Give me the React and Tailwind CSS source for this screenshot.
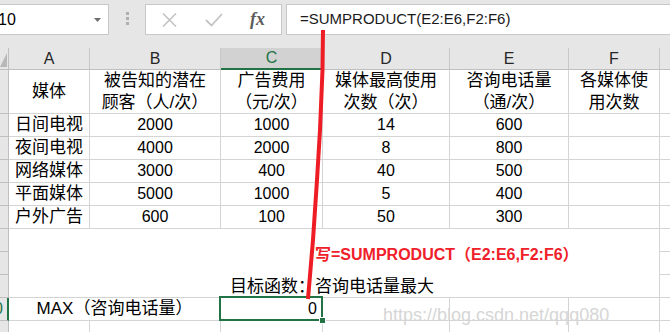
import clsx from "clsx";

const rows = [
  ["日间电视", "2000", "1000", "14", "600"],
  ["夜间电视", "4000", "2000", "8", "800"],
  ["网络媒体", "3000", "400", "40", "500"],
  ["平面媒体", "5000", "1000", "5", "400"],
  ["户外广告", "600", "100", "50", "300"],
];

const headers = [
  ["媒体"],
  ["被告知的潜在", "顾客（人/次）"],
  ["广告费用", "（元/次）"],
  ["媒体最高使用", "次数（次）"],
  ["咨询电话量", "（通/次）"],
  ["各媒体使", "用次数"],
];

const Cell = ({ children, className = "" }) => (
  <div
    className={clsx(
      "flex items-center justify-center border-r border-b border-[#d4d4d4] whitespace-nowrap",
      className
    )}
  >
    {children}
  </div>
);

const RowHead = ({ className = "", children }) => (
  <div
    className={clsx(
      "bg-[#e6e6e6] border-r border-b border-[#bfbfbf] overflow-hidden flex items-center",
      className
    )}
  >
    {children}
  </div>
);

const ColHead = ({ label, active }) => (
  <div
    className={clsx(
      "flex items-center justify-center text-[16px] border-r border-[#c8c8c8]",
      active
        ? "bg-[#d2d2d2] text-[#217346] border-b-2 border-b-[#217346]"
        : "bg-[#e6e6e6] text-[#262626] border-b border-b-[#bfbfbf]"
    )}
  >
    {label}
  </div>
);

const App = () => {
  return (
    <div className="relative w-[670px] h-[332px] overflow-hidden bg-white text-black font-['Liberation_Sans','Noto_Sans_CJK_SC',sans-serif]">
      {/* formula bar */}
      <div className="h-[48px] bg-[#e6e6e6] flex items-start pt-[4px]">
        <div className="-ml-[1px] w-[110px] h-[31px] bg-white border border-[#c8c8c8] flex items-center justify-between pr-[7px]">
          <span className="text-[16px] -ml-[2px]">10</span>
          <svg width="7" height="4" viewBox="0 0 7 4">
            <path d="M0 0h7L3.5 4z" fill="#6f6f6f" />
          </svg>
        </div>
        <div className="w-[36px] flex flex-col items-center gap-[2px] pt-[8px]">
          <span className="w-[3px] h-[3px] bg-[#b0b0b0]" />
          <span className="w-[3px] h-[3px] bg-[#b0b0b0]" />
          <span className="w-[3px] h-[3px] bg-[#b0b0b0]" />
        </div>
        <div className="w-[137px] h-[31px] bg-white border border-[#c8c8c8] flex items-center">
          <svg className="ml-[16px]" width="15" height="14" viewBox="0 0 15 14">
            <path d="M1 0.5l13 13M14 0.5l-13 13" stroke="#c3c3c3" strokeWidth="1.6" />
          </svg>
          <svg className="ml-[28px]" width="18" height="14" viewBox="0 0 18 14">
            <path d="M1 7l5.5 5.5L17 1" stroke="#c3c3c3" strokeWidth="1.8" fill="none" />
          </svg>
          <span className="ml-[27px] text-[18px] italic font-bold text-[#5c5c5c] font-['Liberation_Serif',serif]">
            fx
          </span>
        </div>
        <div className="ml-[4px] flex-1 h-[31px] bg-white border border-r-0 border-[#c8c8c8] flex items-center pl-[13px] text-[15px] text-[#1a1a1a]">
          =SUMPRODUCT(E2:E6,F2:F6)
        </div>
      </div>

      {/* sheet */}
      <div className="grid grid-cols-[9px_81px_131px_102px_127px_119px_91px_10px] grid-rows-[22px_44px_repeat(10,23px)]">
        <div className="bg-[#e6e6e6] border-r border-b border-[#bfbfbf] flex items-end pb-[2px]">
          <svg width="7" height="14" viewBox="0 0 7 14">
            <path d="M7 0V14H0z" fill="#b8b8b8" />
          </svg>
        </div>
        <ColHead label="A" />
        <ColHead label="B" />
        <ColHead label="C" active />
        <ColHead label="D" />
        <ColHead label="E" />
        <ColHead label="F" />
        <div className="bg-[#e6e6e6] border-b border-[#bfbfbf]" />

        <RowHead />
        {headers.map((lines, i) => (
          <Cell key={i} className="flex-col text-[17px] leading-[22px]">
            {lines.map((l) => (
              <span key={l}>{l}</span>
            ))}
          </Cell>
        ))}
        <Cell className="border-r-0" />

        {rows.map((r) => (
          <div key={r[0]} className="contents">
            <RowHead />
            <Cell className="text-[17px]">{r[0]}</Cell>
            <Cell className="text-[16px]">{r[1]}</Cell>
            <Cell className="text-[16px]">{r[2]}</Cell>
            <Cell className="text-[16px]">{r[3]}</Cell>
            <Cell className="text-[16px]">{r[4]}</Cell>
            <Cell />
            <Cell className="border-r-0" />
          </div>
        ))}

        <RowHead className="row-start-8" />
        <div className="col-start-2 col-span-6 row-start-8 row-span-3 border-r border-b border-[#d4d4d4] flex flex-col">
          <div className="pt-[16px] pl-[306px] h-[36px] leading-[20px] text-[16px] font-bold text-[#f0202a] whitespace-nowrap">
            写=SUMPRODUCT（E2:E6,F2:F6）
          </div>
          <div className="mt-[11px] pl-[221px] leading-[22px] text-[17px] whitespace-nowrap">
            目标函数：咨询电话量最大
          </div>
        </div>
        <Cell className="border-r-0 row-start-8 col-start-8" />
        <RowHead className="row-start-9" />
        <Cell className="border-r-0 row-start-9 col-start-8" />
        <RowHead className="row-start-10" />
        <Cell className="border-r-0 row-start-10 col-start-8" />

        <RowHead className="border-r-2 border-r-[#217346]">
          <span className="-ml-[6px] text-[16px] text-[#217346]">0</span>
        </RowHead>
        <Cell className="col-span-2 text-[17px]">MAX（咨询电话量）</Cell>
        <Cell className="relative justify-end pr-[5px] text-[16px]">
          0
          <div className="absolute -left-[2px] -top-[2px] -right-[1px] -bottom-[1px] border-2 border-[#217346]" />
          <div className="absolute -right-[4px] -bottom-[4px] w-[7px] h-[7px] bg-[#217346] border border-white" />
        </Cell>
        <Cell />
        <Cell />
        <Cell />
        <Cell className="border-r-0" />

        <RowHead />
        <Cell />
        <Cell />
        <Cell />
        <Cell />
        <Cell />
        <Cell />
        <Cell className="border-r-0" />
      </div>

      {/* watermark */}
      <div className="absolute left-[383px] top-[302px] text-[18px] text-[#d6d6d6] whitespace-nowrap">
        https://blog.csdn.net/qqq080
      </div>

      {/* red pen annotation */}
      <svg className="absolute left-0 top-0 pointer-events-none" width="670" height="332" viewBox="0 0 670 332">
        <path
          d="M323 30 L322.5 70 L320 130 L317 180 L313 240 L308 299"
          stroke="#ee1c25"
          strokeWidth="4"
          fill="none"
        />
      </svg>
    </div>
  );
};

export default App;
